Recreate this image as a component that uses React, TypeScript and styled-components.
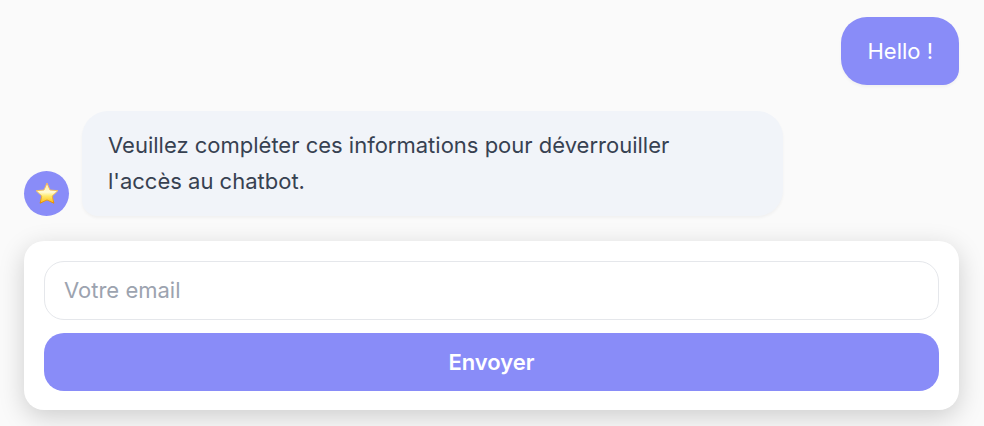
import React, { useState } from "react";
import styled, { createGlobalStyle } from "styled-components";

const GlobalStyle = createGlobalStyle`
  *, *::before, *::after { box-sizing: border-box; }
  body {
    margin: 0;
    background: #fafafa;
    font-family: Inter, "Liberation Sans", sans-serif;
    font-size: 22px;
    line-height: 36px;
    color: #374151;
  }
`;

const Chat = styled.main`
  display: flex;
  flex-direction: column;
  padding: 17px 25px 16px 24px;
`;

const MessageRow = styled.div<{ $own?: boolean }>`
  display: flex;
  align-items: flex-end;
  justify-content: ${(p) => (p.$own ? "flex-end" : "flex-start")};
  gap: 13px;
  margin-bottom: ${(p) => (p.$own ? 26 : 25)}px;
`;

const Bubble = styled.p<{ $own?: boolean }>`
  margin: 0;
  max-width: 75%;
  padding: ${(p) => (p.$own ? "16px 26px" : "16px 40px 17px 26px")};
  color: ${(p) => (p.$own ? "#ffffff" : "#374151")};
  background: ${(p) => (p.$own ? "#898cf8" : "#f1f4f9")};
  border-radius: ${(p) => (p.$own ? "26px 26px 16px 26px" : "26px 26px 26px 16px")};
  box-shadow: 0 2px 3px rgba(0, 0, 0, 0.04);
`;

const Avatar = styled.div`
  display: grid;
  place-items: center;
  flex: none;
  width: 45px;
  height: 45px;
  border-radius: 50%;
  background: #898cf8;
`;

const FormCard = styled.form`
  display: flex;
  flex-direction: column;
  gap: 13px;
  padding: 20px 20px 19px;
  background: #ffffff;
  border-radius: 20px;
  box-shadow: 0 7px 26px rgba(0, 0, 0, 0.18);
`;

const EmailInput = styled.input`
  width: 100%;
  height: 59px;
  padding: 0 19px 2px;
  font: inherit;
  color: #374151;
  background: #ffffff;
  border: 1px solid #e5e7eb;
  border-radius: 20px;
  outline: none;
  &::placeholder { color: #9ca3af; opacity: 1; }
`;

const SubmitButton = styled.button`
  width: 100%;
  height: 58px;
  font: inherit;
  font-weight: 600;
  color: #ffffff;
  background: #898cf8;
  border: 0;
  border-radius: 20px;
  cursor: pointer;
`;

const StarIcon = () => (
  <svg width="24" height="24" viewBox="0 0 24 24" aria-hidden="true">
    <defs>
      <linearGradient id="star-fill" x1="0" y1="0" x2="0" y2="1">
        <stop offset="0" stopColor="#ffe9a0" />
        <stop offset="0.45" stopColor="#fffbd8" />
        <stop offset="0.65" stopColor="#ffe96a" />
        <stop offset="1" stopColor="#fdb913" />
      </linearGradient>
      <linearGradient id="star-edge" x1="0" y1="0" x2="0" y2="1">
        <stop offset="0" stopColor="#f0b060" />
        <stop offset="0.5" stopColor="#f6c65a" />
        <stop offset="1" stopColor="#e58a00" />
      </linearGradient>
    </defs>
    <path
      d="M12 1 15 8 22.8 8.7 17.2 14.1 18.9 21.2 12 17.9 5.1 21.2 6.8 14.1 1.2 8.7 9 8Z"
      fill="url(#star-fill)"
      stroke="url(#star-edge)"
      strokeWidth="1"
      strokeLinejoin="round"
    />
  </svg>
);

export default function App() {
  const [email, setEmail] = useState("");
  return (
    <>
      <GlobalStyle />
      <Chat>
        <MessageRow $own>
          <Bubble $own>Hello !</Bubble>
        </MessageRow>
        <MessageRow>
          <Avatar>
            <StarIcon />
          </Avatar>
          <Bubble>Veuillez compléter ces informations pour déverrouiller l'accès au chatbot.</Bubble>
        </MessageRow>
        <FormCard onSubmit={(e) => e.preventDefault()}>
          <EmailInput
            type="email"
            aria-label="Votre email"
            placeholder="Votre email"
            value={email}
            onChange={(e) => setEmail(e.target.value)}
          />
          <SubmitButton type="submit">Envoyer</SubmitButton>
        </FormCard>
      </Chat>
    </>
  );
}
